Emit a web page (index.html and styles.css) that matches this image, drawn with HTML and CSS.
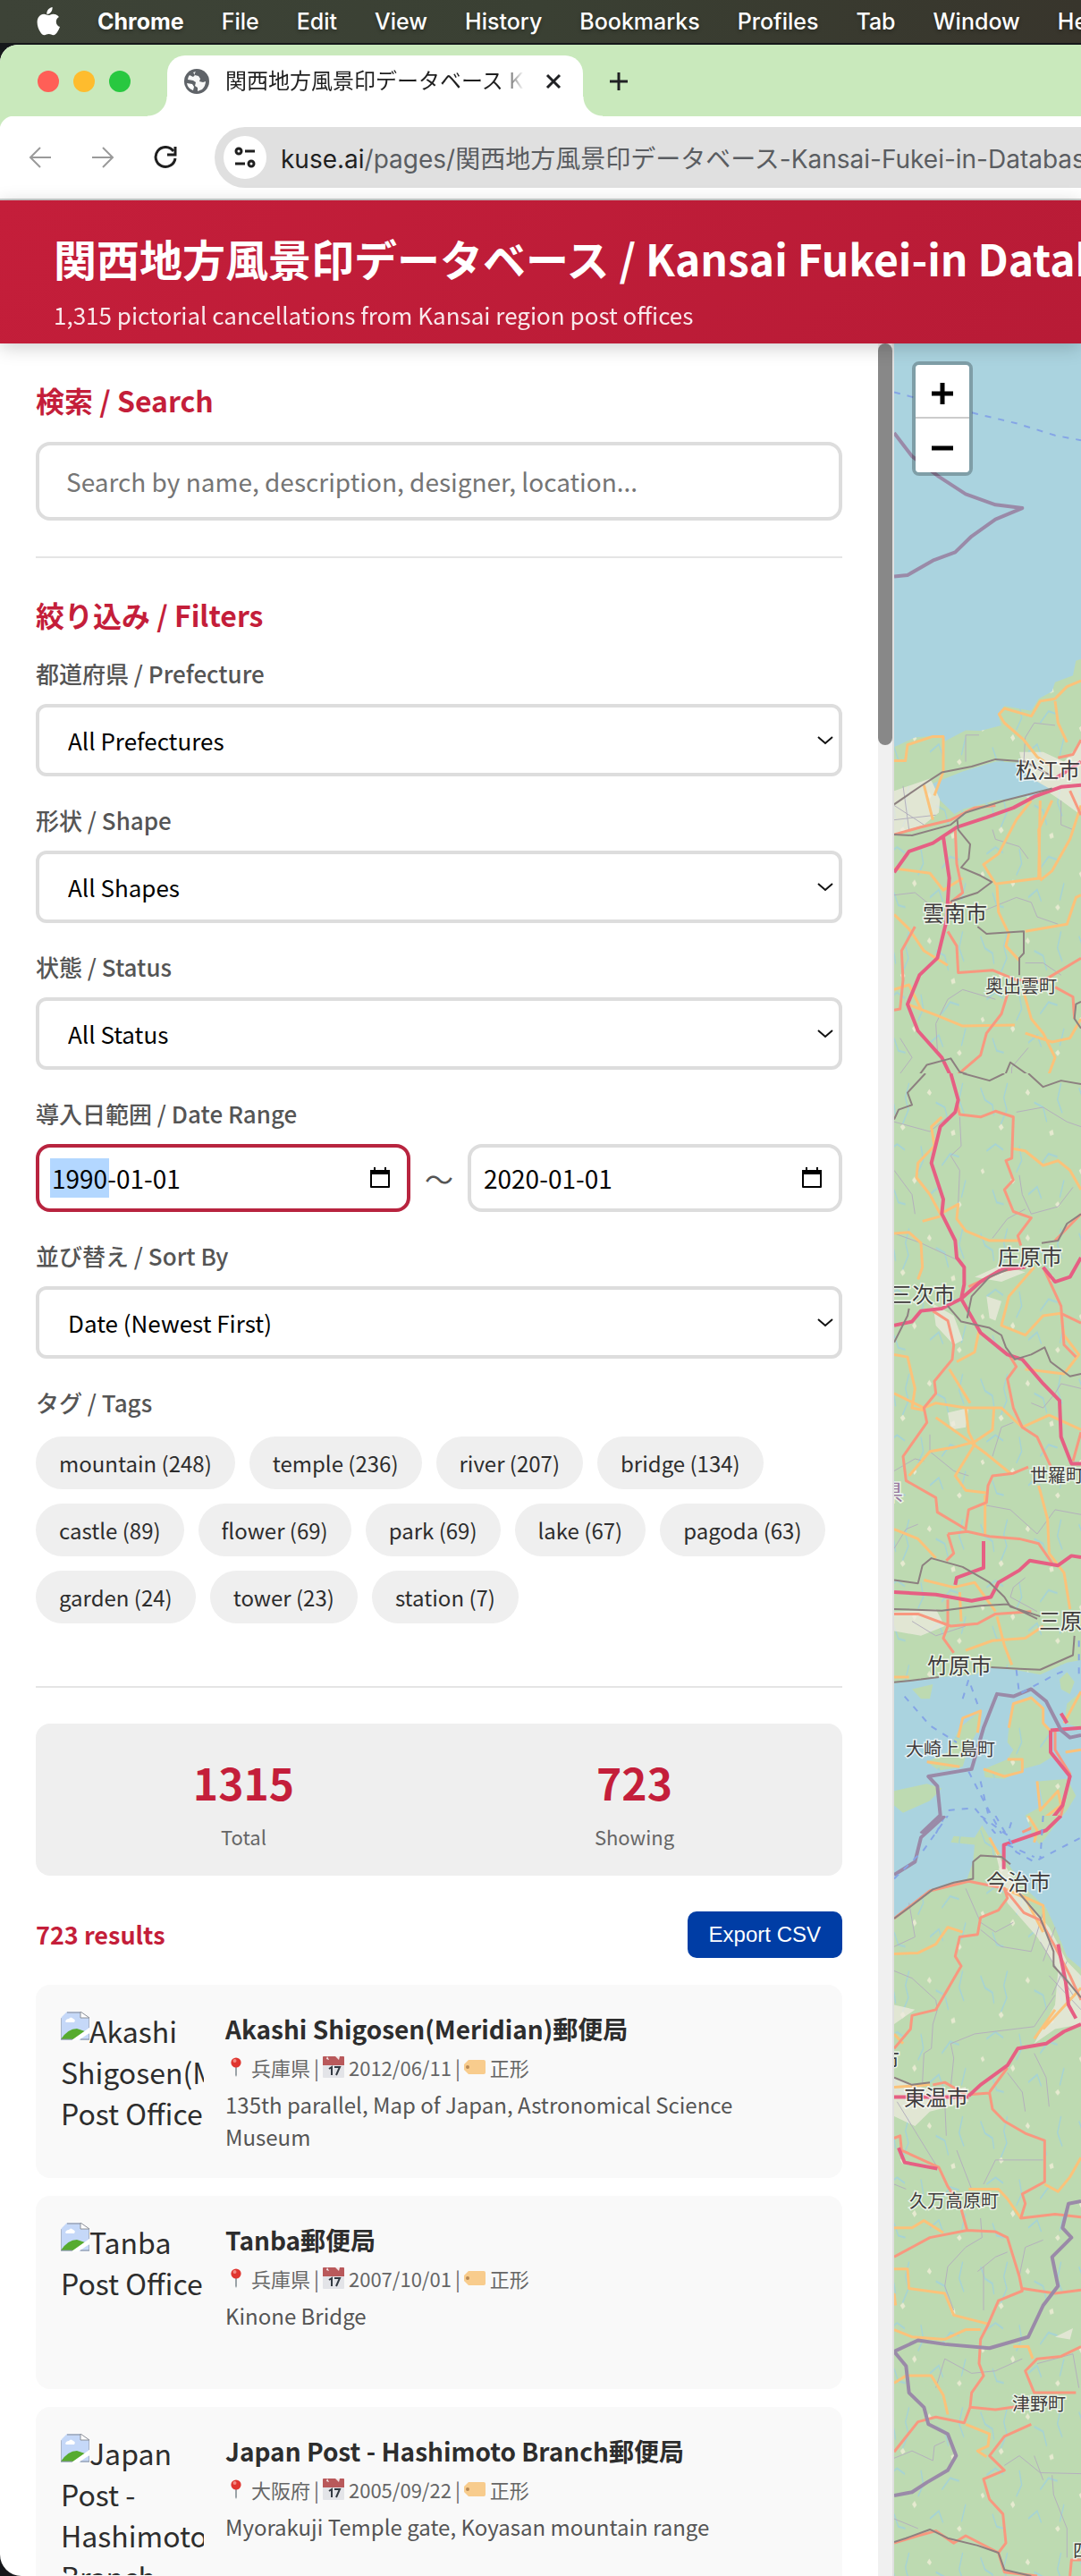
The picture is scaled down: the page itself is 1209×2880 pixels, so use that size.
FILE: index.html
```html
<!DOCTYPE html>
<html lang="ja">
<head>
<meta charset="utf-8">
<meta name="viewport" content="width=device-width, initial-scale=1">
<title>関西地方風景印データベース / Kansai Fukei-in Database</title>
<link rel="stylesheet" href="styles.css">
</head>
<body>
<svg class="defs" width="0" height="0" aria-hidden="true">
  <symbol id="i-pin" viewBox="0 0 24 24">
    <path d="M11 11h2v10l-1 2-1-2z" fill="#9aa3a8"/>
    <circle cx="12" cy="7" r="5.6" fill="#e0352f"/>
    <circle cx="10.5" cy="5" r="2" fill="#f28a82"/>
  </symbol>
  <symbol id="i-cal" viewBox="0 0 24 24">
    <rect x="0" y="0" width="24" height="24" rx="1" fill="#e3e4e8"/>
    <path d="M0 1q0-1 1-1h22q1 0 1 1v9H0z" fill="#b9595b"/>
    <path d="M5 0l2 4-3-1zM14 0h5l-1 4z" fill="#f6e9e9"/>
    <path d="M7 14l3-2v9M13 12h6l-4 9" fill="none" stroke="#333a42" stroke-width="2"/>
  </symbol>
  <symbol id="i-tag" viewBox="0 0 24 24">
    <path d="M5 4h17q2 0 2 2v12q0 2-2 2H5l-5-5V9z" fill="#f8cc8d"/>
    <circle cx="4" cy="12" r="2" fill="#b98a55"/>
  </symbol>
  <symbol id="i-broken" viewBox="0 0 32 32">
    <path d="M0 7l7-7h15l10 7v25H0z" fill="#c5d8f8"/>
    <path d="M5 11q1-3 4-3 2-3 5 0 3 1 1 4H6z" fill="#fff"/>
    <path d="M0 31q8-12 18-12l9 3-12 9z" fill="#56ab2f"/>
    <path d="M32 18v6L20 32h-8z" fill="#fff"/>
    <path d="M22 0v7h10z" fill="#fff" stroke="#8c9098"/>
    <path d="M0 7v24h13M32 7v11M32 25v6H22M7 1h15" fill="none" stroke="#8c9098"/>
  </symbol>
  <symbol id="i-chev" viewBox="0 0 18 12">
    <path d="M1 2l8 7 8-7" fill="none" stroke="#111" stroke-width="2"/>
  </symbol>
  <symbol id="i-date" viewBox="0 0 22 24">
    <path d="M1 5h20v17H1z" fill="none" stroke="#000" stroke-width="2" stroke-linejoin="round"/>
    <path d="M0 3h22v5H0zM4 0h2v4H4zM16 0h2v4h-2z" fill="#000"/>
  </symbol>
</svg>

<nav class="menubar" aria-label="Menu bar">
  <svg class="apple" viewBox="0 0 26 32" aria-hidden="true"><path d="M17.600 0C17.800 2.400 16.900 4.400 15.600 5.900 14.300 7.300 12.700 8 11.300 7.800 11.100 5.700 12 3.700 13.200 2.300 14.400 1 16.200.1 17.600 0zM24.900 11C22.800 12.200 21.800 14 21.800 16.200 21.800 18.900 23.300 21.100 26 22.100 25.400 24 24.500 25.800 23.300 27.500 22 29.400 20.700 31.200 18.600 31.200 16.600 31.200 16 30 13.600 30 11.300 30 10.500 31.200 8.700 31.300 6.700 31.400 5.200 29.300 3.900 27.400 1.200 23.500-.8 16.300 1.900 11.600 3.200 9.300 5.600 7.800 8.100 7.800 10.100 7.800 11.900 9.100 13.100 9.100 14.300 9.100 16.500 7.500 18.800 7.700 19.800 7.800 22.900 8.100 24.900 11z" fill="#fff"/></svg>
  <a href="#" class="app-name">Chrome</a>
  <a href="#">File</a>
  <a href="#">Edit</a>
  <a href="#">View</a>
  <a href="#">History</a>
  <a href="#">Bookmarks</a>
  <a href="#">Profiles</a>
  <a href="#">Tab</a>
  <a href="#">Window</a>
  <a href="#">Help</a>
</nav>

<div class="window">
  <div class="tabstrip">
    <div class="lights"><i class="red"></i><i class="amber"></i><i class="green"></i></div>
    <div class="tab">
      <svg class="globe" viewBox="0 0 28 28" aria-hidden="true"><circle cx="14" cy="14" r="14" fill="#5f6368"/><path d="M13 3q-2 2-1 4l4 1 2 3-1 3 4 1 3-1q0 5-4 9l-5 2 0-4-3-2 1-4-3-2-6-1q0-3 2-5l4 2 2-2-2-3z" fill="#fff" opacity=".95"/><path d="M3 16l6 1 2 3-1 4q-6-2-7-8z" fill="#fff"/></svg>
      <span class="tab-title">関西地方風景印データベース Kansai</span>
      <button class="icon-btn" aria-label="Close tab"><svg width="18" height="18" viewBox="0 0 18 18"><path d="M2 2l14 14M16 2L2 16" stroke="#202124" stroke-width="3"/></svg></button>
    </div>
    <button class="icon-btn newtab" aria-label="New tab"><svg width="22" height="22" viewBox="0 0 22 22"><path d="M11 1v20M1 11h20" stroke="#202124" stroke-width="3"/></svg></button>
  </div>
  <div class="toolbar">
    <button class="icon-btn" aria-label="Back"><svg width="26" height="26" viewBox="0 0 26 26"><path d="M25 13H3M13 2L2 13l11 11" fill="none" stroke="#9a9a9a" stroke-width="2"/></svg></button>
    <button class="icon-btn" aria-label="Forward"><svg width="26" height="26" viewBox="0 0 26 26"><path d="M1 13h22M13 2l11 11-11 11" fill="none" stroke="#9a9a9a" stroke-width="2"/></svg></button>
    <button class="icon-btn" aria-label="Reload"><svg width="26" height="26" viewBox="0 0 26 26"><path d="M22 6A11 11 0 1 0 24 14" fill="none" stroke="#1f1f1f" stroke-width="3"/><path d="M24 1v9h-9" fill="none" stroke="#1f1f1f" stroke-width="3"/></svg></button>
    <div class="urlbar">
      <button class="site-info" aria-label="Site information"><svg width="26" height="24" viewBox="0 0 26 24"><g fill="none" stroke="#1f1f1f" stroke-width="3"><circle cx="6" cy="5" r="3"/><circle cx="20" cy="19" r="3"/><path d="M13 5h11M2 19h11"/></g></svg></button>
      <span class="url"><b>kuse.ai</b>/pages/関西地方風景印データベース-Kansai-Fukei-in-Database</span>
    </div>
  </div>

  <header class="header">
    <h1>関西地方風景印データベース / Kansai Fukei-in Database</h1>
    <p>1,315 pictorial cancellations from Kansai region post offices</p>
  </header>

  <main class="main">
    <div class="sidebar">
      <div class="panel">
        <section class="section">
          <h2><label for="q">検索 / Search</label></h2>
          <input class="search" id="q" type="text" placeholder="Search by name, description, designer, location...">
        </section>
        <section class="section filters">
          <h2>絞り込み / Filters</h2>
          <div class="group">
            <label for="pref">都道府県 / Prefecture</label>
            <div class="select"><select id="pref"><option>All Prefectures</option></select><svg><use href="#i-chev"/></svg></div>
          </div>
          <div class="group">
            <label for="shape">形状 / Shape</label>
            <div class="select"><select id="shape"><option>All Shapes</option></select><svg><use href="#i-chev"/></svg></div>
          </div>
          <div class="group">
            <label for="status">状態 / Status</label>
            <div class="select"><select id="status"><option>All Status</option></select><svg><use href="#i-chev"/></svg></div>
          </div>
          <div class="group">
            <label for="from">導入日範囲 / Date Range</label>
            <div class="range">
              <div class="date active"><input id="from" type="text" value="1990-01-01"><button aria-label="Choose start date"><svg><use href="#i-date"/></svg></button></div>
              <span>〜</span>
              <div class="date"><input type="text" value="2020-01-01" aria-label="End date"><button aria-label="Choose end date"><svg><use href="#i-date"/></svg></button></div>
            </div>
          </div>
          <div class="group">
            <label for="sort">並び替え / Sort By</label>
            <div class="select"><select id="sort"><option>Date (Newest First)</option></select><svg><use href="#i-chev"/></svg></div>
          </div>
          <div class="group">
            <h3>タグ / Tags</h3>
            <div class="tags">
              <button>mountain (248)</button>
              <button>temple (236)</button>
              <button>river (207)</button>
              <button>bridge (134)</button>
              <button>castle (89)</button>
              <button>flower (69)</button>
              <button>park (69)</button>
              <button>lake (67)</button>
              <button>pagoda (63)</button>
              <button>garden (24)</button>
              <button>tower (23)</button>
              <button>station (7)</button>
            </div>
          </div>
        </section>
        <section class="stats">
          <div><strong>1315</strong><span>Total</span></div>
          <div><strong>723</strong><span>Showing</span></div>
        </section>
        <div class="results-head">
          <h4>723 results</h4>
          <button>Export CSV</button>
        </div>
        <div class="cards">
          <article class="card">
            <div class="thumb"><svg><use href="#i-broken"/></svg>Akashi Shigosen(Meridian) Post Office</div>
            <div class="info">
              <h5>Akashi Shigosen(Meridian)郵便局</h5>
              <p class="meta"><svg><use href="#i-pin"/></svg><span>兵庫県</span><span>|</span><svg><use href="#i-cal"/></svg><span>2012/06/11</span><span>|</span><svg><use href="#i-tag"/></svg><span>正形</span></p>
              <p class="desc">135th parallel, Map of Japan, Astronomical Science Museum</p>
            </div>
          </article>
          <article class="card">
            <div class="thumb"><svg><use href="#i-broken"/></svg>Tanba Post Office</div>
            <div class="info">
              <h5>Tanba郵便局</h5>
              <p class="meta"><svg><use href="#i-pin"/></svg><span>兵庫県</span><span>|</span><svg><use href="#i-cal"/></svg><span>2007/10/01</span><span>|</span><svg><use href="#i-tag"/></svg><span>正形</span></p>
              <p class="desc">Kinone Bridge</p>
            </div>
          </article>
          <article class="card">
            <div class="thumb"><svg><use href="#i-broken"/></svg>Japan Post - Hashimoto Branch</div>
            <div class="info">
              <h5>Japan Post - Hashimoto Branch郵便局</h5>
              <p class="meta"><svg><use href="#i-pin"/></svg><span>大阪府</span><span>|</span><svg><use href="#i-cal"/></svg><span>2005/09/22</span><span>|</span><svg><use href="#i-tag"/></svg><span>正形</span></p>
              <p class="desc">Myorakuji Temple gate, Koyasan mountain range</p>
            </div>
          </article>
        </div>
      </div>
      <div class="scrollbar"><div class="thumbbar"></div></div>
    </div>

    <div class="map">
      <svg class="tiles" viewBox="0 0 209 2496" preserveAspectRatio="xMinYMin slice" role="img" aria-label="Map of western Japan">
        <defs>
          <pattern id="land" width="330" height="300" patternUnits="userSpaceOnUse">
            <rect width="330" height="300" fill="#bddab1"/>
            <g fill="none" stroke="#a5d3d6" stroke-width="4">
              <path d="M20 30l15 25 25 10 5 22M110 20l-12 30 10 25-20 30M200 60l30 10 12 30M290 20l-12 34 16 28M40 160l30-14 26 12M150 150l8 30-18 24M220 190l28-24 30 6M60 240l14 26 24 4M180 250l30-16 14 24M300 220l-14 36"/>
            </g>
            <g fill="#e6ead0"><path d="M80 110l10-6 8 8-10 6zM170 40l8-8 8 8-6 6zM250 120l12-4 4 10-12 3zM120 220l9-7 7 9-8 6zM20 200l8-4 6 8-8 4zM270 270l10-6 7 7-8 6z"/></g>
          </pattern>
        </defs>
        <rect width="209" height="2496" fill="#aad3df"/>

        <!-- Shimane coast -->
        <svg y="-4" width="209" height="850" viewBox="60 0 627 1568" preserveAspectRatio="none">
          <path class="land" d="M60 840L130 820 225 815 230 828 300 805 350 806 420 795 408 772 430 755 520 765 545 740 590 725 600 706 660 692 670 662 687 658V1568H60z"/>
          <path class="town" d="M60 930L180 905 215 940 210 975 160 1000 60 1020zM480 850L560 850 630 870 687 830 687 980 620 950 560 925 500 900z"/>
          <path class="sea" d="M190 915L290 890 400 870 480 872 510 900 580 925 530 940 400 950 290 968 262 978 215 950z"/>
          <path class="minor" d="M300 870V815H345M495 870L500 820 530 790 600 795M390 1010L400 1030 480 1045 510 1070M620 950V1000L660 1010M60 1145L130 1140 190 1170M350 1180L470 1150 520 1160 540 1190 610 1205M500 1285H560L620 1310M205 1465L200 1410 240 1360 290 1340 400 1360M80 1440L120 1480 60 1530M450 1568L455 1500 510 1460M60 960L160 1000M90 920L110 1010M60 990L200 980"/>
          <path class="primary" d="M60 868H98L105 835 190 818H225V890L195 940M160 918L190 990M590 880L540 860 495 825 430 790 412 772 430 760 520 776 550 745 600 740 640 715 687 703M600 745L610 790 640 830M60 1090L180 1100 225 1135 290 1110M550 950L545 1110M590 950L545 1010 550 1110 400 1122 360 1082 410 1060 470 990 520 950M687 960L650 1030 590 1095 550 1115M405 1125L410 1180 445 1225 435 1250 480 1280M500 1220L640 1205 670 1150 687 1145M60 1185L110 1215 160 1260 240 1290M105 1370L210 1395 290 1415 465 1413M495 1345L520 1400 560 1430 600 1480 570 1530M500 1430L590 1448 650 1440 687 1400M60 1340L110 1330 150 1380"/>
          <path class="trunk" d="M60 1020L150 1005 250 990 330 965 400 960M265 1010L270 1080 290 1140 240 1165M240 1220L270 1250 275 1305 390 1300 470 1320 560 1322 687 1275M130 1210L85 1260 90 1320 80 1380 60 1382M440 1350L420 1390 370 1430 350 1475 265 1520M610 862L660 855 687 825M650 930L687 980M600 1335L660 1355 665 1400"/>
          <path class="motor" d="M60 1098L110 1055 190 1038 270 1005 370 985 460 965 530 942 620 922 687 918M225 1025L245 1110 235 1200 205 1275 145 1310 105 1370 140 1425 220 1480 275 1550V1568M600 905L687 870"/>
          <path class="rail" d="M60 958L150 920 220 892 320 880 400 865 500 870 590 900M60 1020L120 1022 250 1000 300 975 430 950 590 925M272 990L275 1010 315 1040 310 1070 285 1088 350 1105 388 1118 340 1140 250 1158M340 1210L370 1225 495 1220V1265L480 1275V1310M100 1553L170 1495 250 1482 280 1510 390 1530 430 1520 450 1490 530 1525 590 1540 640 1520 687 1525M687 1420L665 1400 670 1370 687 1365"/>
          <path class="border" d="M60 192L120 240 210 282 300 318 400 340 490 347 400 370 320 405 265 438 190 455 105 485 60 488"/>
          <path class="ferry" d="M60 108L340 153 470 172 600 197 687 207"/>
        </svg>

        <!-- Hiroshima and the Inland Sea -->
        <svg y="816" width="209" height="850" viewBox="60 0 627 1568" preserveAspectRatio="none">
          <path class="land" d="M60 0H687V1210L640 1215 550 1240 480 1232 385 1225 330 1240 210 1245 60 1258z"/>
          <path class="land" d="M445 1350L460 1300 520 1284 560 1310 560 1340 590 1360 590 1410 550 1425 490 1435 430 1455 365 1452 360 1435 440 1415 460 1395 440 1380zM170 1420L240 1400 280 1350 350 1315 350 1345 310 1390 290 1430 210 1438zM545 1460L640 1455 670 1490 640 1520 600 1550 520 1560 500 1530 560 1510zM60 1480L170 1465 220 1475 180 1500 90 1525 60 1510zM630 1340L640 1300 687 1275V1350zM615 1250L640 1235 665 1255 650 1280 620 1270zM120 1270L190 1260 180 1290 150 1290z"/>
          <path class="town" d="M190 475L260 500 290 550 260 560 200 520zM370 460L420 470 400 510 380 505zM60 1110L200 1105 230 1140 150 1160 60 1150zM330 420L420 395 500 410 420 430zM240 700L310 690 300 730 250 735z"/>
          <path class="minor" d="M280 90L285 150 250 170 280 200 275 270M60 100L180 120 240 90M480 210L490 250 520 290 610 275 660 235M390 340L440 300 500 280M60 330L150 350 220 370 290 390M470 80L560 70 640 100 687 110M60 200L120 250 130 290M180 745V780L260 820 310 830M60 820L130 795 160 800M500 1040L460 1060 450 1080 540 1110M520 680L560 690 600 660 620 640 687 650M390 790L420 730 460 720M360 890L450 900 540 950 600 900 687 910M60 980L100 940 140 930M120 1130L200 1160 300 1140"/>
          <path class="primary" d="M220 90L185 110 195 150 140 185 135 215 180 250 215 290 275 270 270 300 300 325 380 345 480 345M60 330L110 328 150 350 155 400 140 425M155 305L215 295M455 155L500 160 560 190 610 180 650 200 687 240M60 580L105 585 130 650 120 690 160 695M60 660L160 690 200 680 300 690 420 690 490 730 580 705 687 735M200 710L270 740 370 785 450 825M110 830L180 780 270 770 330 760 390 735 395 690M300 690L310 740 330 765 265 830 300 860 370 865M245 610L315 680M270 595L330 575 345 530M530 400L445 460 420 520 500 540 560 500 620 495 630 540 680 580 630 620 500 610M365 870V950M60 940L140 960 200 1000M545 850L575 920 580 990 630 1030 650 1105M160 1045L260 1060 330 1050 400 1110M300 1190L390 1170 500 1165 560 1140M405 1120L430 1180 455 1220M280 1070L285 1130M60 1245H110"/>
          <path class="primary" d="M445 1350L460 1300 520 1288 560 1310 560 1340 590 1360M360 1435L430 1450 490 1440 490 1415 440 1415M170 1420L280 1430M275 1370L290 1330 350 1315 340 1360M540 1460L550 1520 610 1480 620 1510 510 1560M630 1340L687 1275M635 1400L687 1395"/>
          <path class="trunk" d="M270 60L280 85 350 90 400 78 460 90 455 175 435 180 460 220 430 240 460 285 520 298 475 335 485 355M190 490L240 510 260 560 255 590 195 635 200 660 160 690 170 720 90 790 100 840 200 875 205 905 300 940 310 900 370 885 375 850 390 830 460 825 510 812M60 1115L140 1115 250 1140 340 1135 400 1115 520 1110M240 1085V1140L225 1165 260 1195M240 950L305 945 380 955 480 960 545 970 590 1010M240 950L260 990 235 1005M445 580L470 605 440 630 460 690 490 730 540 750 585 810M560 400L620 480 630 560 670 585M310 440L420 408 480 400M620 495L687 515M600 1355L600 1395 650 1445 620 1530 490 1565M660 800L687 740M600 345L687 290"/>
          <path class="motor" d="M250 0L275 55 265 80 215 110 185 185 225 260 220 290 265 345 270 380 295 400V435L285 465M60 520L120 512 150 490 220 485 285 465 350 430 420 405 500 400M285 465L350 535 440 580 490 590 560 640 615 675 620 750 655 805H687M560 400L600 430 650 420 687 380M60 1070L200 1075 320 1088 385 1080 410 1050 480 1025 515 1005 610 1015 655 995 687 998M360 965V1020L270 1040 265 1055M585 1355V1400L650 1450 625 1510 560 1560M585 1355L687 1350M640 1340L620 1320"/>
          <path class="rail" d="M60 95L75 75 120 65 105 40 165 0M290 0L380 15 430 0M510 0L560 28 620 15 687 22M60 555L105 500 110 485M240 480L285 512 380 525 420 540 435 565 465 590 520 580 565 565 585 595 650 625 687 620M305 505L320 460 380 420 440 405M555 350L610 345 640 310 687 290M60 1045L140 1052 155 1015 185 1000 290 1018 380 1050 430 1080 450 1100 550 1120M60 1105L220 1108 350 1098 440 1095 540 1125M665 1160L660 1200 550 1230 480 1228 385 1225M60 1256L150 1250 210 1245"/>
          <path class="border" d="M150 1568L215 1530 205 1470 175 1450 320 1435 360 1350 405 1280 460 1285 520 1270 570 1295 620 1355 650 1370 687 1365"/>
          <path class="ferry" d="M95 1285L180 1345 270 1380M290 1290L310 1250 345 1310M470 1230L480 1280 600 1240 640 1230M200 1568L240 1520 330 1515 400 1568M310 1440L360 1500 420 1568M680 1170V1240M350 1460L380 1540"/>
        </svg>

        <!-- Ehime and Kochi -->
        <svg y="1646" width="209" height="850" viewBox="60 0 627 1568" preserveAspectRatio="none">
          <path class="land" d="M60 210L180 155 250 138 305 130 325 95 330 60 250 55 260 42 330 45 355 20 380 45 420 80 460 115 500 150 570 190 600 230 640 290 687 315V1568H60zM520 10L560 0 620 0 600 20 550 60 520 40z"/>
          <path class="town" d="M400 75L440 110 500 170 580 230 640 300 687 330V430L600 440 530 470 600 390 610 320 540 250 440 180zM60 540L200 570 300 560 310 590 180 610 130 640 60 620zM600 1075L660 1057 650 1080zM60 390L130 400 60 430z"/>
          <path class="minor" d="M60 320L120 335 200 380 205 400 190 430 185 480 160 490 155 550M350 235L420 270 520 280 560 200M300 150L350 220 400 240 460 220M250 560L260 500 250 470 330 450 530 435 600 370M110 180L130 250 60 270M440 530L490 570 500 610M530 490L570 540 580 600M70 590L130 650 200 720M230 590L235 660M270 690L320 770M360 760L400 710 560 710M60 760L100 770M350 830L355 870 300 890 240 930 230 970 260 1020M480 950L500 890 560 875M340 940L400 910 440 900M360 930V1020M60 1325L120 1310 190 1330 195 1300 230 1290M200 1180L230 1120 320 1150 400 1145 490 1120M430 1340L480 1320 550 1355 687 1357M530 1320L560 1370M590 1360L595 1400 640 1470V1530M540 1130L660 1110 680 1180M60 1450L140 1470M550 260L660 370M600 230L560 300M580 330L687 400M590 370L640 300"/>
          <path class="primary" d="M60 285L140 283 200 265 240 230 290 240M380 45L410 80M470 160L560 185 565 235M430 150L500 170 560 240M600 400L530 460M687 355L560 440M60 450L90 470M60 560L180 555M310 770L410 770 440 790 485 830M60 850L120 850 160 835 225 860M60 935H105L110 975 230 985 260 1030 375 1048M60 1060L120 1075 230 1080 300 1060 350 1060M60 1170L100 1155 185 1155 225 1195 240 1235M300 1255L380 1275 375 1300 340 1310 370 1322M460 1095L510 1095 525 1120M565 760L610 775 650 745 687 705M60 985L65 1010M510 0L540 30 530 55"/>
          <path class="trunk" d="M60 480L115 440 120 412 200 400 285 310 265 290 280 250 340 245 350 210 410 195 440 170 430 150 310 135 180 155 60 212M430 150L495 200 550 215 600 270 650 330 687 380M310 575L380 572 390 605 430 630 500 655 565 670V755L490 780 500 800 485 830 600 822 687 828M60 665L80 660 85 690 210 725 240 765 280 800 305 855 400 858 440 870 480 950 490 980 410 1000 375 1050 350 1080 345 1130 360 1155 320 1190 315 1220 295 1252 200 1240 140 1250 60 1312M305 855L180 870 60 910M490 975L600 985 687 978M315 1220L400 1225 510 1215M520 1255L430 1280 380 1320 430 1350 360 1368 380 1410 425 1440 435 1500 410 1520 430 1560 540 1568M687 1095L620 1115 540 1120 500 1145 530 1190 670 1190M60 1500L140 1485 200 1475 260 1500 300 1485 410 1520M190 555L230 550 300 575M440 520L380 570M650 1568L655 1535H687"/>
          <path class="motor" d="M310 578L350 555 440 515 475 480 570 470 630 445 687 430M60 580H310M75 685L95 715 205 728M428 110V60L500 45 570 30 620 0M610 265L635 340 645 390 670 418"/>
          <path class="rail" d="M60 212L120 185 190 152 260 138 325 130V95L350 82 420 85 450 100M480 160L550 210 595 280V310L640 340 687 375M60 540L120 555 180 550M60 1498L100 1490 180 1472 240 1490 340 1505 410 1520 430 1555 520 1568"/>
          <path class="border" d="M60 122L130 95 150 45 230 0M687 795L645 800 625 850 655 870 590 910 610 970 560 1010 510 1075 380 1098 230 1090 140 1082 60 1105 100 1135 110 1190 160 1220 175 1255 240 1275 268 1320 240 1350 170 1375 120 1395 60 1402"/>
          <path class="ferry" d="M60 130L160 70 240 0M350 0L440 40 460 0M400 0L470 75 530 95 687 45M440 60L530 85M560 0L550 90"/>
        </svg>

        <g class="places">
          <text class="city" x="136" y="486">松江市</text>
          <text class="city" x="32" y="646">雲南市</text>
          <text class="townname" x="102" y="726">奥出雲町</text>
          <text class="city" x="116" y="1030">庄原市</text>
          <text class="city" x="-4" y="1072">三次市</text>
          <text class="townname" x="152" y="1273">世羅町</text>
          <text class="pref" x="-14" y="1293">県</text>
          <text class="city" x="162" y="1437">三原市</text>
          <text class="city" x="37" y="1487">竹原市</text>
          <text class="townname" x="13" y="1579">大崎上島町</text>
          <text class="city" x="103" y="1729">今治市</text>
          <text class="city" x="-18" y="1928">市</text>
          <text class="city" x="11" y="1970">東温市</text>
          <text class="townname" x="17" y="2084">久万高原町</text>
          <text class="townname" x="132" y="2311">津野町</text>
          <text class="townname" x="200" y="2475">四万十町</text>
        </g>
      </svg>
      <div class="zoom">
        <button aria-label="Zoom in"><svg viewBox="0 0 24 24"><path d="M12 0v24M0 12h24"/></svg></button>
        <button aria-label="Zoom out"><svg viewBox="0 0 24 24"><path d="M0 12h24"/></svg></button>
      </div>
    </div>
  </main>
</div>
</body>
</html>
```

FILE: styles.css
```css
* { box-sizing: border-box; }

body {
  margin: 0;
  height: 100vh;
  display: flex;
  flex-direction: column;
  overflow: hidden;
  background: #15171a;
  color: #2d2d2d;
  font-family: "Noto Sans CJK JP", sans-serif;
  font-size: 32px;
}

h1, h2, h3, h4, h5, p { margin: 0; }
button, input, select { font-family: inherit; margin: 0; }
button { border: 0; padding: 0; background: none; cursor: pointer; }
.defs { position: absolute; }

/* system menu bar */
.menubar {
  flex: none;
  height: 48px;
  margin-bottom: 2px;
  padding-left: 41px;
  display: flex;
  align-items: center;
  gap: 42px;
  overflow: hidden;
  background: linear-gradient(90deg, #3d4337, #3a4033 50%, #38352c);
  font-family: Inter, sans-serif;
  font-size: 25px;
  font-weight: 500;
}
.menubar a {
  flex: none;
  color: #fff;
  text-decoration: none;
  line-height: 46px;
  text-shadow: 0 2px 4px rgba(0, 0, 0, .3);
}
.menubar .app-name { font-weight: 700; }
.apple { flex: none; width: 26px; height: 32px; }

/* browser window */
.window {
  flex: 1;
  min-height: 0;
  display: flex;
  flex-direction: column;
  overflow: hidden;
  border-radius: 20px 0 0 24px;
  background: #fff;
}
.tabstrip {
  flex: none;
  height: 80px;
  padding: 12px 0 0 42px;
  display: flex;
  background: #c9e9bc;
}
.lights { width: 145px; display: flex; gap: 16px; padding-top: 17px; }
.lights i { width: 24px; height: 24px; border-radius: 50%; }
.red { background: #ff5f57; }
.amber { background: #febc2e; }
.green { background: #28c840; }
.tab {
  position: relative;
  width: 465px;
  padding: 0 24px 10px 19px;
  display: flex;
  align-items: center;
  border-radius: 20px 20px 0 0;
  background: #fff;
}
.tab::before, .tab::after {
  content: "";
  position: absolute;
  bottom: 0;
  width: 22px;
  height: 22px;
}
.tab::before { left: -22px; background: radial-gradient(circle at 0 0, transparent 21px, #fff 22px); }
.tab::after { right: -22px; background: radial-gradient(circle at 100% 0, transparent 21px, #fff 22px); }
.globe { flex: none; width: 28px; height: 28px; margin-right: 18px; }
.tab-title {
  flex: 1;
  overflow: hidden;
  white-space: nowrap;
  color: #1f1f1f;
  font-family: Inter, "Noto Sans CJK JP", sans-serif;
  font-size: 24px;
  line-height: 36px;
  -webkit-mask-image: linear-gradient(90deg, #000 308px, transparent 334px);
  mask-image: linear-gradient(90deg, #000 308px, transparent 334px);
}
.icon-btn { flex: none; display: flex; align-items: center; justify-content: center; }
.newtab { width: 80px; padding-bottom: 10px; }

.toolbar {
  flex: none;
  height: 94px;
  padding-left: 32px;
  display: flex;
  align-items: center;
  gap: 44px;
  border-bottom: 2px solid #ccc;
  background: radial-gradient(circle at 16px 16px, #fff 16px, #c9e9bc 17px) no-repeat 0 0 / 16px 16px, #fff;
}
.urlbar {
  flex: 1;
  min-width: 0;
  height: 68px;
  margin-left: -2px;
  padding-left: 10px;
  display: flex;
  align-items: center;
  gap: 16px;
  overflow: hidden;
  border-radius: 34px 0 0 34px;
  background: #e0e0e0;
}
.site-info {
  flex: none;
  width: 48px;
  height: 48px;
  display: flex;
  align-items: center;
  justify-content: center;
  border-radius: 50%;
  background: #fff;
}
.url {
  white-space: nowrap;
  color: #5a5d61;
  font-family: Inter, "Noto Sans CJK JP", sans-serif;
  font-size: 28px;
}
.url b { font-weight: 400; color: #1f1f1f; }

/* page header */
.header {
  position: relative;
  z-index: 1;
  flex: none;
  padding: 28px 60px 10px;
  overflow: hidden;
  white-space: nowrap;
  background: linear-gradient(135deg, #c41e3a, #b81b36);
  color: #fff;
  box-shadow: 0 4px 20px rgba(0, 0, 0, .2);
}
.header h1 { font-size: 48px; line-height: 72px; }
.header p { margin-top: 6px; font-size: 26px; line-height: 44px; opacity: .9; }

.main {
  flex: 1;
  min-height: 0;
  display: grid;
  grid-template-columns: minmax(0, 1000px) minmax(209px, 1fr);
}
.sidebar { min-height: 0; display: flex; overflow: hidden; }
.panel { flex: 1; min-width: 0; padding: 40px; }
.scrollbar { flex: none; width: 18px; background: #f0f0f0; border-right: 2px solid #e0e0e0; }
.thumbbar { height: 18%; border-radius: 8px; background: #888; }

/* filters */
.section { padding-bottom: 40px; border-bottom: 2px solid #e5e5e5; }
.section h2 {
  margin-bottom: 24px;
  color: #c41e3a;
  font-size: 32px;
  font-weight: 700;
  line-height: 46px;
}
.search {
  display: block;
  width: 100%;
  height: 88px;
  padding: 0 30px;
  border: 4px solid #ddd;
  border-radius: 16px;
  font-size: 28px;
}
.search::placeholder { color: #757575; }
.filters { padding: 40px 0 44px; }
.filters h2 { margin-bottom: 20px; }
.group { margin-bottom: 26px; }
.group > label, .group h3 {
  display: block;
  margin-bottom: 11px;
  color: #555;
  font-size: 26px;
  font-weight: 500;
  line-height: 46px;
}
.group h3 { margin-bottom: 15px; }
.select { display: grid; align-items: center; }
.select select, .select svg { grid-area: 1 / 1; }
.select select {
  height: 81px;
  padding: 0 32px;
  border: 4px solid #ddd;
  border-radius: 12px;
  background: #fff;
  color: #000;
  font-size: 26px;
  appearance: none;
}
.select svg { justify-self: end; width: 18px; height: 12px; margin-right: 10px; pointer-events: none; }
.range { display: flex; align-items: center; gap: 16px; }
.range > span { width: 32px; color: #555; font-size: 32px; text-align: center; line-height: 40px; }
.date {
  flex: 1;
  min-width: 0;
  height: 76px;
  padding: 0 19px 0 12px;
  display: flex;
  align-items: center;
  border: 4px solid #ddd;
  border-radius: 16px;
}
.date input {
  flex: 1;
  min-width: 0;
  height: 44px;
  padding: 0 2px;
  border: 0;
  background: none;
  color: #000;
  font-size: 28px;
}
.date button, .date svg { display: block; width: 22px; height: 24px; }
.date.active { border-color: #b8243f; }
.date.active input { background: linear-gradient(#b3d7ff, #b3d7ff) no-repeat 0 0 / 66px 44px; }
.tags { display: flex; flex-wrap: wrap; gap: 16px; }
.tags button {
  height: 59px;
  padding: 0 26px;
  border-radius: 30px;
  background: #efefef;
  color: #2d2d2d;
  font-size: 24px;
}

/* counts and results */
.stats {
  margin-top: 40px;
  padding: 28px 28px 20px;
  display: grid;
  grid-template-columns: 1fr 1fr;
  gap: 28px;
  border-radius: 16px;
  background: #efefef;
  text-align: center;
}
.stats div { display: flex; flex-direction: column; }
.stats strong { color: #c41e3a; font-size: 48px; line-height: 74px; }
.stats span { color: #666; font-size: 22px; line-height: 48px; }
.results-head {
  margin: 40px 0 30px;
  display: flex;
  align-items: center;
  justify-content: space-between;
}
.results-head h4 { color: #c41e3a; font-size: 27px; line-height: 52px; }
.results-head button {
  height: 52px;
  padding: 0 24px;
  border-radius: 10px;
  background: #003da5;
  color: #fff;
  font-family: "Liberation Sans", sans-serif;
  font-size: 24px;
}
.cards { display: flex; flex-direction: column; gap: 20px; }
.card {
  height: 216px;
  padding: 28px;
  display: flex;
  gap: 24px;
  border-radius: 16px;
  background: #f9f9f9;
}
.thumb {
  flex: none;
  width: 160px;
  height: 160px;
  overflow: hidden;
  border-radius: 12px;
  font-size: 32px;
  line-height: 46px;
}
.thumb svg { width: 32px; height: 32px; vertical-align: 3px; }
.info { min-width: 0; }
.info h5 { font-size: 28px; line-height: 42px; }
.meta {
  display: flex;
  align-items: center;
  gap: 4px;
  color: #666;
  font-size: 22px;
  line-height: 44px;
}
.meta svg { width: 24px; height: 24px; margin-right: 1px; }
.desc { margin-top: 2px; color: #555; font-size: 24px; line-height: 36px; }

/* map */
.map { position: relative; min-height: 0; overflow: hidden; background: #bddab1; }
.tiles { display: block; width: 100%; height: 100%; }
.land { fill: url(#land); }
.sea { fill: #aad3df; }
.town { fill: #eeeadf; fill-opacity: .75; }
.minor, .primary, .trunk, .motor, .rail, .border, .ferry {
  fill: none;
  stroke-linejoin: round;
  vector-effect: non-scaling-stroke;
}
.minor { stroke: #b4b0bd; stroke-width: 1px; }
.primary { stroke: #fbc27a; stroke-width: 3px; }
.trunk { stroke: #f8987f; stroke-width: 3px; }
.motor { stroke: #e65f83; stroke-width: 4px; }
.rail { stroke: #8d8080; stroke-width: 2px; }
.border { stroke: #9a8aa8; stroke-width: 4px; }
.ferry { stroke: #85a5e6; stroke-width: 2px; stroke-dasharray: 7 8; }
.places { fill: #403c3c; stroke: rgba(255, 255, 255, .7); stroke-width: 3px; paint-order: stroke; }
.city { font-size: 24px; }
.townname { font-size: 20px; }
.pref { font-size: 24px; fill: #9a7aa0; }
.zoom {
  position: absolute;
  top: 20px;
  left: 20px;
  width: 68px;
  border: 4px solid rgba(0, 0, 0, .25);
  border-radius: 8px;
  background-clip: padding-box;
}
.zoom button {
  display: flex;
  align-items: center;
  justify-content: center;
  width: 60px;
  height: 60px;
  padding-top: 6px;
  background: #fff;
}
.zoom svg { width: 24px; height: 24px; fill: none; stroke: #000; stroke-width: 5px; }
.zoom button:first-child { border-bottom: 2px solid #ccc; border-radius: 4px 4px 0 0; }
.zoom button:last-child { border-radius: 0 0 4px 4px; }
```
